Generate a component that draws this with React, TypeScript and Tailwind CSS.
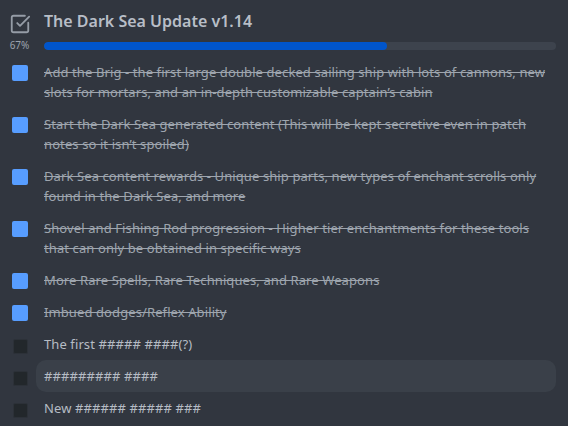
import { SquareCheckBig } from 'lucide-react';

const items = [
  {
    text: 'Add the Brig - the first large double decked sailing ship with lots of cannons, new slots for mortars, and an in-depth customizable captain\u2019s cabin',
    done: true,
  },
  {
    text: 'Start the Dark Sea generated content (This will be kept secretive even in patch notes so it isn\u2019t spoiled)',
    done: true,
  },
  {
    text: 'Dark Sea content rewards - Unique ship parts, new types of enchant scrolls only found in the Dark Sea, and more',
    done: true,
  },
  {
    text: 'Shovel and Fishing Rod progression - Higher tier enchantments for these tools that can only be obtained in specific ways',
    done: true,
  },
  { text: 'More Rare Spells, Rare Techniques, and Rare Weapons', done: true },
  { text: 'Imbued dodges/Reflex Ability', done: true },
  { text: 'The first ##### ####(?)', done: false },
  { text: '######### ####', done: false, hover: true },
  { text: 'New ###### ##### ###', done: false },
];

function Item({ item }: { item: (typeof items)[0] }) {
  return (
    <div className="flex items-start">
      <div className="w-[36px] shrink-0 flex justify-center pl-[4px] pt-[9px]">
        {item.done ? (
          <div className="w-4 h-4 rounded-[2px] bg-[#579dff]" />
        ) : (
          <div className="w-[15px] h-[15px] rounded-[2px] bg-[#22272b] border border-[#2c3138] mt-[2px]" />
        )}
      </div>
      <div
        className={`flex-1 mr-3 px-2 py-1.5 rounded-[10px] text-[13px] leading-5 tracking-[0.1px] ${
          item.hover ? 'bg-[#3a4049]' : ''
        } ${item.done ? 'line-through text-[#9ea5ae]' : 'text-[#b6bcc4]'}`}
      >
        {item.text}
      </div>
    </div>
  );
}

export default function App() {
  return (
    <div
      className="w-[568px] h-[426px] bg-[#31363f] overflow-hidden"
      style={{ fontFamily: '"Noto Sans", "Open Sans", sans-serif' }}
    >
      <div className="flex items-start h-[56px] pt-[9px]">
        <div className="w-[40px] shrink-0 flex flex-col items-center">
          <SquareCheckBig className="w-[22px] h-[22px] text-[#959ca6] mt-[4px]" strokeWidth={2} />
          <span className="text-[10px] leading-3 text-[#9ca3ad] mt-[4px] -ml-[1px]">67%</span>
        </div>
        <div className="flex-1 pl-1 pr-3">
          <h1 className="text-[16px] leading-6 font-semibold text-[#b8bec7]">The Dark Sea Update v1.14</h1>
          <div className="mt-[9px] h-[8px] rounded-full bg-[#3d434d] overflow-hidden">
            <div className="h-full rounded-full bg-[#0055cc]" style={{ width: '67%' }} />
          </div>
        </div>
      </div>
      <div>
        {items.map((item, i) => (
          <Item key={i} item={item} />
        ))}
      </div>
    </div>
  );
}
